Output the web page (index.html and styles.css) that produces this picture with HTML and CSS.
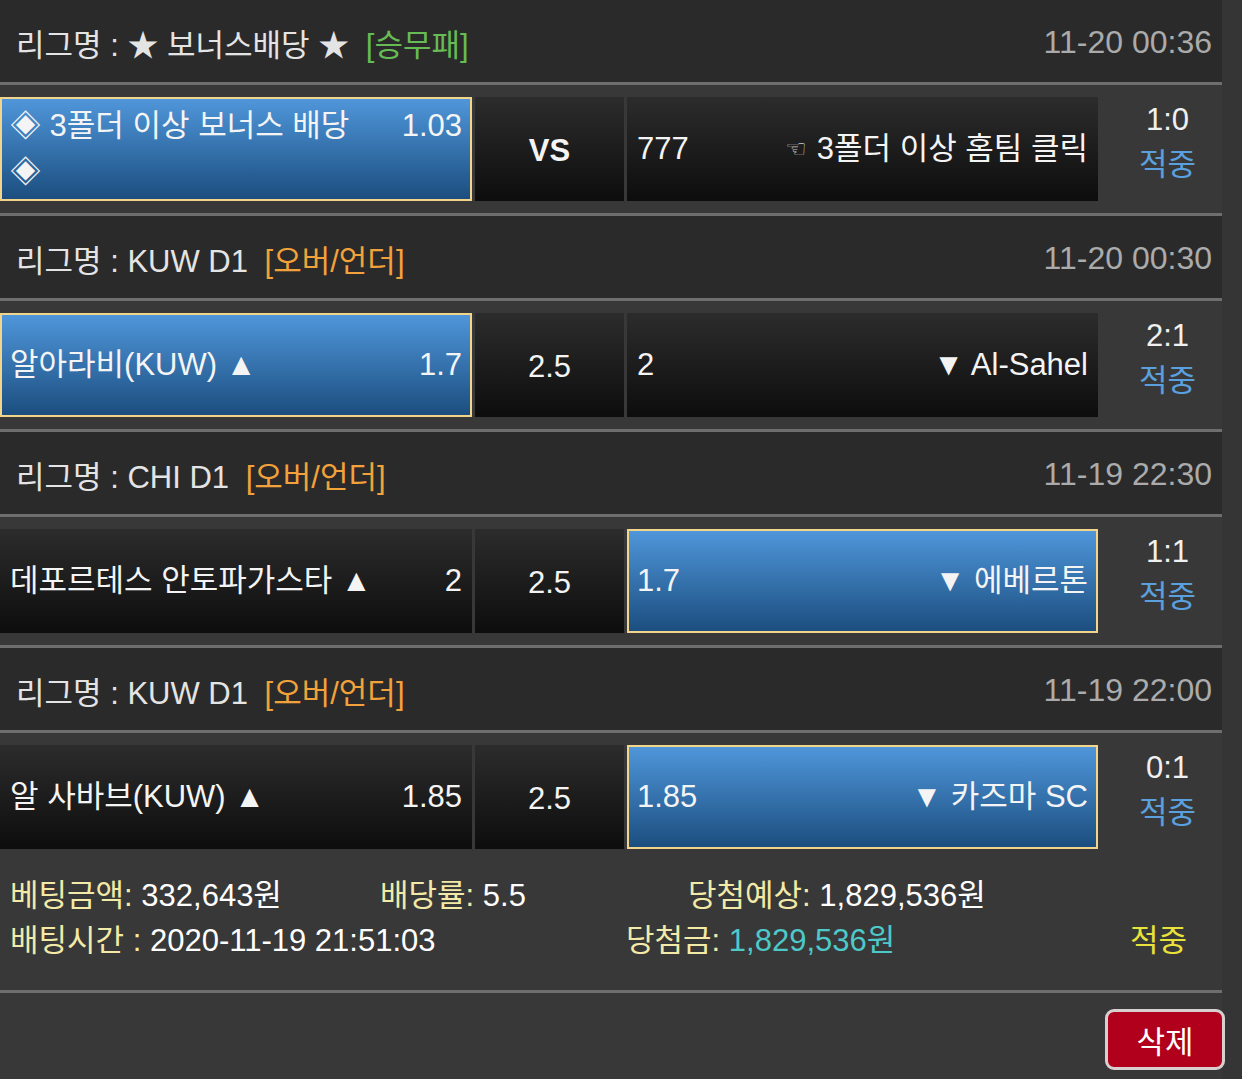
FILE: index.html
```html
<!DOCTYPE html>
<html lang="ko">
<head>
    <meta charset="UTF-8">
    <meta name="viewport" content="width=device-width, initial-scale=1.0">
    <title>베팅내역</title>
    <link rel="stylesheet" href="styles.css">
</head>
<body>
    <div class="slip">
        <!-- 경기 1 -->
        <div class="league">
            <div class="league-name">리그명 : ★ 보너스배당 ★ <span class="tag tag-win">[승무패]</span></div>
            <div class="league-date">11-20 00:36</div>
        </div>
        <div class="match">
            <div class="cell picked">
                <div class="pick-body">
                    <span class="team">◈ 3폴더 이상 보너스 배당 ◈</span>
                    <span class="odds">1.03</span>
                </div>
            </div>
            <div class="cell center vs">VS</div>
            <div class="cell">
                <div class="pick-body">
                    <span class="odds">777</span>
                    <span class="team"><span class="hand">☜</span>3폴더 이상 홈팀 클릭</span>
                </div>
            </div>
            <div class="result">
                <span class="score">1:0</span>
                <span class="status">적중</span>
            </div>
        </div>

        <!-- 경기 2 -->
        <div class="league">
            <div class="league-name">리그명 : KUW D1 <span class="tag tag-ou">[오버/언더]</span></div>
            <div class="league-date">11-20 00:30</div>
        </div>
        <div class="match">
            <div class="cell picked">
                <div class="pick-body">
                    <span class="team">알아라비(KUW) ▲</span>
                    <span class="odds">1.7</span>
                </div>
            </div>
            <div class="cell center">2.5</div>
            <div class="cell">
                <div class="pick-body">
                    <span class="odds">2</span>
                    <span class="team">▼ Al-Sahel</span>
                </div>
            </div>
            <div class="result">
                <span class="score">2:1</span>
                <span class="status">적중</span>
            </div>
        </div>

        <!-- 경기 3 -->
        <div class="league">
            <div class="league-name">리그명 : CHI D1 <span class="tag tag-ou">[오버/언더]</span></div>
            <div class="league-date">11-19 22:30</div>
        </div>
        <div class="match">
            <div class="cell">
                <div class="pick-body">
                    <span class="team">데포르테스 안토파가스타 ▲</span>
                    <span class="odds">2</span>
                </div>
            </div>
            <div class="cell center">2.5</div>
            <div class="cell picked">
                <div class="pick-body">
                    <span class="odds">1.7</span>
                    <span class="team">▼ 에베르톤</span>
                </div>
            </div>
            <div class="result">
                <span class="score">1:1</span>
                <span class="status">적중</span>
            </div>
        </div>

        <!-- 경기 4 -->
        <div class="league">
            <div class="league-name">리그명 : KUW D1 <span class="tag tag-ou">[오버/언더]</span></div>
            <div class="league-date">11-19 22:00</div>
        </div>
        <div class="match">
            <div class="cell">
                <div class="pick-body">
                    <span class="team">알 사바브(KUW) ▲</span>
                    <span class="odds">1.85</span>
                </div>
            </div>
            <div class="cell center">2.5</div>
            <div class="cell picked">
                <div class="pick-body">
                    <span class="odds">1.85</span>
                    <span class="team">▼ 카즈마 SC</span>
                </div>
            </div>
            <div class="result">
                <span class="score">0:1</span>
                <span class="status">적중</span>
            </div>
        </div>

        <!-- 베팅 요약 -->
        <div class="summary">
            <div class="summary-line">
                <span class="item w-amount"><span class="label">베팅금액:</span> 332,643원</span>
                <span class="item w-rate"><span class="label">배당률:</span> 5.5</span>
                <span class="item"><span class="label">당첨예상:</span> 1,829,536원</span>
            </div>
            <div class="summary-line">
                <span class="item w-time"><span class="label">배팅시간 :</span> 2020-11-19 21:51:03</span>
                <span class="item w-win"><span class="label">당첨금:</span> <span class="win-amount">1,829,536원</span></span>
                <span class="item hit">적중</span>
            </div>
        </div>

        <div class="actions">
            <button class="btn-delete" type="button">삭제</button>
        </div>
    </div>
</body>
</html>
```

FILE: styles.css
```css
body {
    margin: 0;
    padding: 0;
    background-color: #353535;
    color: #ffffff;
    font-family: "Liberation Sans", "Noto Sans CJK KR", sans-serif;
    font-size: 31px;
    overflow: hidden;
}

.slip {
    width: 1222px;
    background-color: #383838;
}

.league {
    height: 80px;
    padding: 2px 10px 0 16px;
    display: flex;
    align-items: center;
    justify-content: space-between;
    background-color: #2a2a2a;
    border-bottom: 3px solid #6e6e6e;
    color: #e4e4e4;
}

.match + .league {
    border-top: 3px solid #6e6e6e;
}

.tag {
    margin-left: 8px;
}

.tag-win {
    color: #66bb55;
}

.tag-ou {
    color: #f2a23a;
}

.league-date {
    color: #ababab;
    font-size: 32px;
}

.match {
    display: grid;
    grid-template-columns: 472px 149px 471px 1fr;
    column-gap: 3px;
    height: 104px;
    padding: 12px 0;
}

.cell {
    height: 104px;
    box-sizing: border-box;
    padding: 0 10px;
    display: flex;
    align-items: center;
    line-height: 46px;
    background: linear-gradient(#2c2c2c, #0d0d0d);
    color: #f4f4f4;
}

.cell.picked {
    background: linear-gradient(#4f96da, #1b4e7f);
    border: 2px solid #f2d48b;
    padding: 0 8px;
}

.cell.center {
    justify-content: center;
    padding-top: 4px;
}

.cell.vs {
    font-weight: bold;
    padding-top: 4px;
}

.pick-body {
    flex: 1;
    display: flex;
    justify-content: space-between;
    align-items: flex-start;
    gap: 22px;
}

.hand {
    font-family: "DejaVu Sans", sans-serif;
    font-size: 24px;
    color: #c8c8c8;
    margin-right: 10px;
    vertical-align: 2px;
}

.result {
    display: flex;
    flex-direction: column;
    align-items: center;
    justify-content: center;
    line-height: 45px;
    padding: 0 0 14px 12px;
}

.score {
    color: #f0f0f0;
}

.status {
    color: #5ba0de;
}

.summary {
    padding: 12px 10px 27px;
    line-height: 45px;
    border-bottom: 3px solid #6e6e6e;
}

.summary-line {
    display: flex;
}

.summary .label {
    color: #f3eaa8;
}

.w-amount { width: 370px; }
.w-rate { width: 308px; }
.w-time { width: 616px; }
.w-win { width: 504px; }

.win-amount {
    color: #4dc9c9;
}

.hit {
    color: #e9e23b;
}

.actions {
    height: 70px;
    padding-top: 16px;
    display: flex;
    justify-content: flex-end;
    align-items: flex-start;
}

.btn-delete {
    width: 120px;
    height: 61px;
    margin-right: -3px;
    background-color: #b1001c;
    border: 3px solid #d8d0d0;
    border-radius: 9px;
    color: #ffffff;
    font-family: inherit;
    font-size: 31px;
    cursor: pointer;
}
```
